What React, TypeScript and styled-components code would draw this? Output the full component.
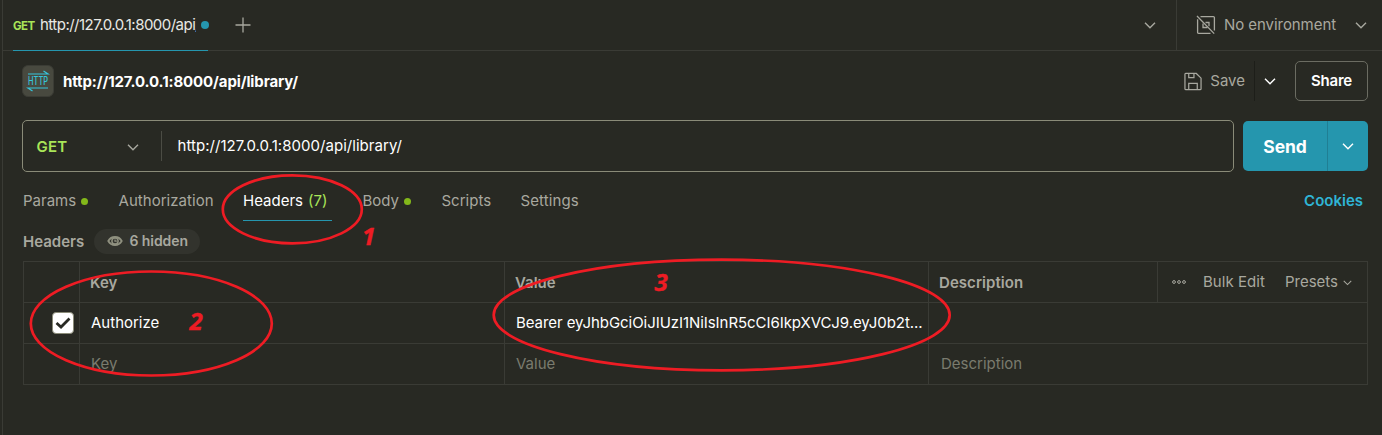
import React from "react";
import styled, { createGlobalStyle } from "styled-components";

const c = {
  bg: "#282923",
  line: "#3a3b35",
  muted: "#a8a89f",
  faint: "#7a7b6e",
  white: "#ffffff",
  teal: "#2596ae",
  link: "#2fb5d6",
  green: "#a9e558",
  dot: "#83b81a",
  red: "#ee1c24",
};

const GlobalStyle = createGlobalStyle`
  * { box-sizing: border-box; }
  body { margin: 0; background: ${c.bg}; font-family: Inter, "Liberation Sans", sans-serif; font-size: 15px; }
`;

const Page = styled.div`
  position: relative;
  width: 1382px;
  height: 435px;
  overflow: hidden;
  display: flex;
  background: ${c.bg};
  color: ${c.muted};
`;
const Rail = styled.div`
  width: 3px;
  flex: none;
  border-right: 1px solid ${c.line};
`;
const Main = styled.div`
  flex: 1;
  min-width: 0;
  display: flex;
  flex-direction: column;
`;
const Label = styled.span<{ $color?: string; $weight?: number; $size?: number; $track?: number }>`
  color: ${(p) => p.$color ?? c.muted};
  font-weight: ${(p) => p.$weight ?? 400};
  font-size: ${(p) => p.$size ?? 15}px;
  letter-spacing: ${(p) => p.$track ?? 0}px;
  line-height: 20px;
  white-space: nowrap;
`;

const TabBar = styled.header`
  height: 51px;
  flex: none;
  display: flex;
  border-bottom: 1px solid ${c.line};
  padding-left: 10px;
`;
const RequestTab = styled.div`
  width: 195px;
  height: 51px;
  display: flex;
  align-items: center;
  border-bottom: 1px solid ${c.teal};
`;
const Verb = styled.div`
  width: 22px;
  flex: none;
  display: flex;
  padding-top: 1px;
`;
const TabTitle = styled.div`
  width: 156px;
  flex: none;
  margin-left: 5px;
  margin-right: 5px;
  overflow: hidden;
  display: flex;
`;
const Dot = styled.i<{ $color: string; $size: number }>`
  width: ${(p) => p.$size}px;
  height: ${(p) => p.$size}px;
  flex: none;
  border-radius: 50%;
  background: ${(p) => p.$color};
`;
const NewTab = styled.div`
  display: flex;
  align-items: center;
  padding-left: 27px;
`;
const TabMenu = styled.div`
  margin-left: auto;
  width: 32px;
  display: flex;
  align-items: center;
`;
const Environment = styled.div`
  width: 206px;
  height: 50px;
  border-left: 1px solid ${c.line};
  display: flex;
  align-items: center;
  padding: 0 15px 0 19px;
  gap: 8px;
`;
const Push = styled.div`
  margin-left: auto;
  display: flex;
  align-items: center;
`;

const TitleRow = styled.div`
  height: 60px;
  flex: none;
  display: flex;
  align-items: center;
  padding: 0 14px 0 19px;
`;
const HttpBadge = styled.div`
  width: 32px;
  height: 32px;
  margin-right: 9px;
  border-radius: 6px;
  border: 1px solid #3b3c35;
  background: #48493f;
  display: flex;
  align-items: center;
  justify-content: center;
`;
const Title = styled.div`
  padding-top: 2px;
  display: flex;
`;
const SaveButton = styled.div`
  height: 40px;
  padding-right: 9px;
  display: flex;
  align-items: center;
  gap: 8px;
  border-right: 1px solid #1d1e19;
`;
const SaveMenu = styled.div`
  width: 40px;
  padding-left: 9px;
  display: flex;
`;
const ShareButton = styled.div`
  width: 73px;
  height: 40px;
  display: flex;
  align-items: center;
  justify-content: center;
  border: 1px solid #6b6c62;
  border-radius: 5px;
`;

const UrlRow = styled.div`
  height: 52px;
  margin-top: 9px;
  flex: none;
  display: flex;
  align-items: center;
  gap: 9px;
  padding: 0 14px 0 19px;
`;
const UrlField = styled.div`
  flex: 1;
  height: 52px;
  display: flex;
  align-items: center;
  border: 1px solid #8a8b78;
  border-radius: 5px;
`;
const Method = styled.div`
  width: 139px;
  height: 30px;
  display: flex;
  align-items: center;
  justify-content: space-between;
  padding: 1px 22px 0 13.5px;
  border-right: 1px solid #4b4c44;
`;
const UrlText = styled.div`
  padding-left: 15.5px;
`;
const SendGroup = styled.div`
  width: 125px;
  height: 50px;
  display: flex;
  border-radius: 5px;
  background: ${c.teal};
`;
const SendPart = styled.div<{ $main?: boolean }>`
  width: ${(p) => (p.$main ? 85 : 40)}px;
  padding-top: ${(p) => (p.$main ? 1 : 0)}px;
  display: flex;
  align-items: center;
  justify-content: center;
  border-right: ${(p) => (p.$main ? "1px solid #207f94" : "0")};
`;

const SectionTabs = styled.nav`
  height: 50px;
  flex: none;
  display: flex;
  align-items: flex-start;
  padding: 19px 19px 0 20px;
`;
const SectionTab = styled.div<{ $width: number; $active?: boolean }>`
  width: ${(p) => p.$width}px;
  height: 30px;
  display: flex;
  align-items: flex-start;
  gap: 5px;
  border-bottom: 1px solid ${(p) => (p.$active ? c.teal : "transparent")};
  & > i { margin-top: 7px; }
`;
const Gap = styled.div<{ $w: number }>`
  width: ${(p) => p.$w}px;
`;
const HeadingRow = styled.div`
  height: 39px;
  flex: none;
  display: flex;
  align-items: center;
  padding-left: 20px;
`;
const Heading = styled.div`
  width: 71px;
  display: flex;
`;
const Pill = styled.div`
  height: 25px;
  width: 106px;
  display: flex;
  align-items: center;
  padding: 0 0 1px 13px;
  gap: 6.5px;
  border-radius: 13px;
  background: #32332d;
`;

const Table = styled.div`
  margin-left: 20px;
  width: 1345px;
  flex: none;
  border: 1px solid ${c.line};
`;
const Row = styled.div`
  display: grid;
  grid-template-columns: 55px 425px 424px 1fr;
  height: 41px;
  & + & { border-top: 1px solid ${c.line}; }
  &:first-child { height: 40px; }
`;
const Cell = styled.div<{ $indent?: number; $drop?: number; $lift?: number }>`
  display: flex;
  align-items: center;
  min-width: 0;
  padding-left: ${(p) => p.$indent ?? 11}px;
  & + & { border-left: 1px solid ${c.line}; }
  & > span {
    padding-top: ${(p) => p.$drop ?? 0}px;
    padding-bottom: ${(p) => p.$lift ?? 0}px;
  }
`;
const TableActions = styled.div`
  margin-left: auto;
  width: 210px;
  height: 40px;
  display: flex;
  align-items: center;
  padding-left: 14px;
  border-left: 1px solid ${c.line};
`;
const Checkbox = styled.div`
  width: 22px;
  height: 22px;
  border-radius: 4px;
  border: 1px solid #8a8b78;
  background: ${c.white};
  display: flex;
  align-items: center;
  justify-content: center;
`;
const Annotations = styled.svg`
  position: absolute;
  inset: 0;
  pointer-events: none;
`;

const Chevron = ({ color = c.muted, w = 12 }: { color?: string; w?: number }) => (
  <svg width={w} height={w} viewBox="0 0 12 12" fill="none" stroke={color} strokeWidth="1.4">
    <path d="M1 3.7 6 8.7 11 3.7" />
  </svg>
);

export default function App() {
  return (
    <>
      <GlobalStyle />
      <Page>
        <Rail />
        <Main>
          <TabBar>
            <RequestTab>
              <Verb>
                <Label $color={c.green} $weight={700} $size={11.5} $track={-0.6}>GET</Label>
              </Verb>
              <TabTitle>
                <Label $color="#e8e8e4" $track={-0.52}>http://127.0.0.1:8000/api/library/</Label>
              </TabTitle>
              <Dot $color={c.teal} $size={8} />
            </RequestTab>
            <NewTab>
              <svg width="16" height="16" stroke={c.muted} strokeWidth="1.3">
                <path d="M8 .5v15M.5 8h15" />
              </svg>
            </NewTab>
            <TabMenu><Chevron /></TabMenu>
            <Environment>
              <svg width="20" height="20" viewBox="0 0 20 20" fill="none" stroke={c.muted} strokeWidth="1.3">
                <path d="M4.5 1.6H17.4a1 1 0 0 1 1 1V15.5M1.6 4.2V17.4a1 1 0 0 0 1 1H14.5M1 1 18.2 18.6" />
                <path d="M7 8.5v4h4.5M9.5 7.5H13v3.8" />
              </svg>
              <Label $track={-0.06}>No environment</Label>
              <Push><Chevron /></Push>
            </Environment>
          </TabBar>

          <TitleRow>
            <HttpBadge>
              <svg width="24" height="22" viewBox="0 0 24 22" fill="none" stroke="#36c5dc" strokeWidth="1.2">
                <path d="M2 4H22L17.5 1M22 18H2L6.5 21" />
                <text x="2" y="15.2" textLength="20" lengthAdjust="spacingAndGlyphs" fontSize="11.5" fontWeight="500" fill="#36c5dc" stroke="none">HTTP</text>
              </svg>
            </HttpBadge>
            <Title><Label $color={c.white} $weight={700} $track={-0.11}>http://127.0.0.1:8000/api/library/</Label></Title>
            <Push>
              <SaveButton>
                <svg width="18" height="19" viewBox="0 0 19 19" fill="none" stroke={c.muted} strokeWidth="1.3">
                  <path d="M1.7 1H13l5 5v11.3a.7.7 0 0 1-.7.7H1.7a.7.7 0 0 1-.7-.7V1.7A.7.7 0 0 1 1.7 1ZM5 1v4.5h5.5V1M5 18v-6.5h9V18" />
                </svg>
                <Label>Save</Label>
              </SaveButton>
              <SaveMenu><Chevron color={c.white} /></SaveMenu>
              <ShareButton><Label $color={c.white} $weight={600} $track={-0.2}>Share</Label></ShareButton>
            </Push>
          </TitleRow>

          <UrlRow>
            <UrlField>
              <Method>
                <Label $color={c.green} $weight={600} $track={0.2}>GET</Label>
                <Chevron />
              </Method>
              <UrlText><Label $color={c.white} $track={0.04}>http://127.0.0.1:8000/api/library/</Label></UrlText>
            </UrlField>
            <SendGroup>
              <SendPart $main><Label $color={c.white} $weight={700} $size={17.5} $track={-0.1}>Send</Label></SendPart>
              <SendPart><Chevron color={c.white} /></SendPart>
            </SendGroup>
          </UrlRow>

          <SectionTabs>
            <SectionTab $width={95.5}><Label>Params</Label><Dot $color={c.dot} $size={7} /></SectionTab>
            <SectionTab $width={124.5}><Label $track={0.04}>Authorization</Label></SectionTab>
            <SectionTab $width={89} $active>
              <Label $color={c.white}>Headers</Label>
              <Label $color={c.green}>(7)</Label>
            </SectionTab>
            <Gap $w={30.5} />
            <SectionTab $width={79}><Label>Body</Label><Dot $color={c.dot} $size={7} /></SectionTab>
            <SectionTab $width={79}><Label>Scripts</Label></SectionTab>
            <SectionTab $width={80}><Label $track={0.12}>Settings</Label></SectionTab>
            <Push><Label $color={c.link} $weight={600}>Cookies</Label></Push>
          </SectionTabs>

          <HeadingRow>
            <Heading><Label $weight={600}>Headers</Label></Heading>
            <Pill>
              <svg width="16" height="12" viewBox="0 0 16 12" fill="none" stroke="#8f907f">
                <path strokeWidth="1.8" d="M1.3 6C2.8 3.3 5 2 8 2s5.2 1.3 6.7 4C13.2 8.7 11 10 8 10S2.8 8.7 1.3 6Z" />
                <circle cx="8" cy="6" r="3.1" strokeWidth="1.5" />
                <path d="M8 4.4V6.2H9.8" strokeWidth="1.3" />
              </svg>
              <Label $weight={600} $size={14} $track={-0.07}>6 hidden</Label>
            </Pill>
          </HeadingRow>

          <Table>
            <Row>
              <Cell />
              <Cell $indent={10} $drop={1}><Label $weight={600}>Key</Label></Cell>
              <Cell $indent={10} $drop={1}><Label $weight={600}>Value</Label></Cell>
              <Cell $indent={10} $drop={1}>
                <Label $weight={600} $track={0.05}>Description</Label>
                <TableActions>
                  <svg width="14" height="6" fill="none" stroke={c.muted} strokeWidth="1">
                    <circle cx="2" cy="3" r="1.4" /><circle cx="7" cy="3" r="1.4" /><circle cx="12" cy="3" r="1.4" />
                  </svg>
                  <Gap $w={17} />
                  <Label $track={0.05}>Bulk Edit</Label>
                  <Gap $w={20} />
                  <Label>Presets</Label>
                  <Gap $w={5} />
                  <Chevron w={9} />
                </TableActions>
              </Cell>
            </Row>
            <Row>
              <Cell $indent={28}>
                <Checkbox>
                  <svg width="16" height="14" viewBox="0 0 16 14" fill="none" stroke={c.bg} strokeWidth="2.8">
                    <path d="m1.5 7 4.5 4L14.5 2.5" />
                  </svg>
                </Checkbox>
              </Cell>
              <Cell><Label $color={c.white}>Authorize</Label></Cell>
              <Cell><Label $color={c.white} $track={-0.06}>Bearer eyJhbGciOiJIUzI1NiIsInR5cCI6IkpXVCJ9.eyJ0b2t...</Label></Cell>
              <Cell />
            </Row>
            <Row>
              <Cell />
              <Cell $lift={1}><Label $color={c.faint}>Key</Label></Cell>
              <Cell $lift={1}><Label $color={c.faint}>Value</Label></Cell>
              <Cell $lift={1} $indent={12}><Label $color={c.faint}>Description</Label></Cell>
            </Row>
          </Table>
        </Main>
        <Annotations width="1382" height="435" fill="none" stroke={c.red} strokeWidth="2.7">
          <ellipse cx="292.3" cy="209.3" rx="69.5" ry="34" />
          <ellipse cx="151.3" cy="323.5" rx="120.5" ry="52" />
          <ellipse cx="721.7" cy="315" rx="228" ry="55.3" />
          <g fill={c.red} stroke={c.red} strokeWidth="0.4" fontFamily='"Noto Sans", "Open Sans", sans-serif' fontWeight="700" fontStyle="italic" fontSize="24">
            <text x="362" y="245">1</text>
            <text x="189.5" y="330">2</text>
            <text x="654.5" y="291">3</text>
          </g>
        </Annotations>
      </Page>
    </>
  );
}
